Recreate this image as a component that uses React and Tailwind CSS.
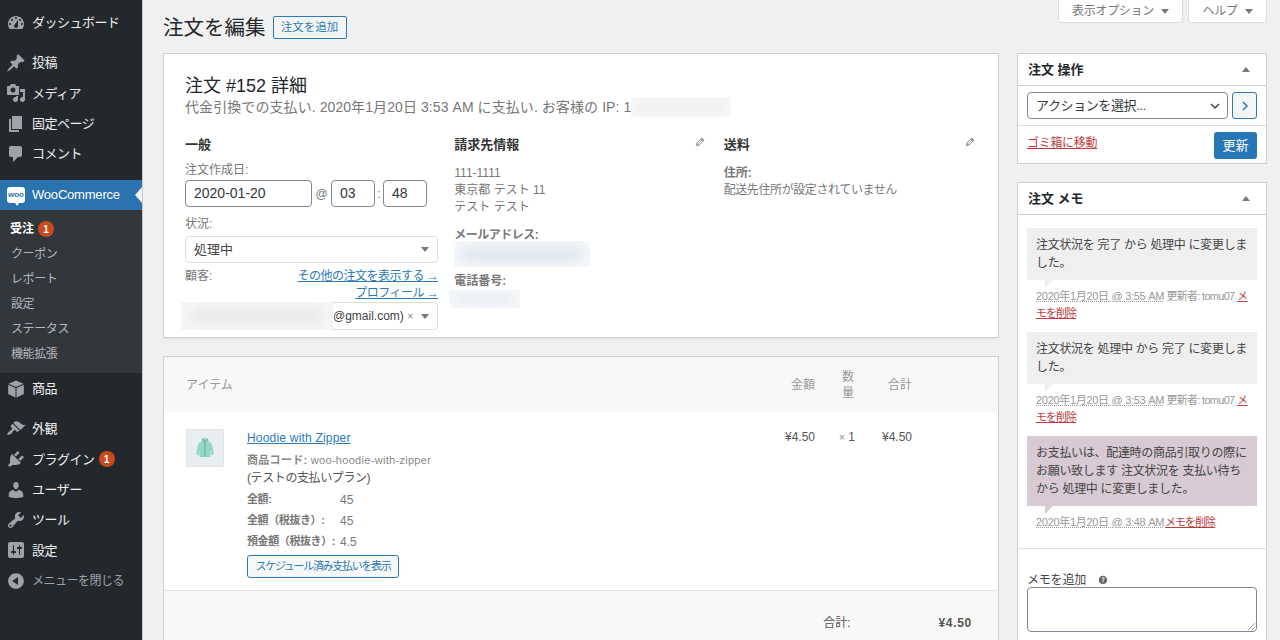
import React from "react";

const font = { fontFamily: '"Liberation Sans", "Noto Sans CJK JP", sans-serif' };

const ICONS = {
  dashboard: "M3.76 16h12.48c1.1-1.37 1.76-3.11 1.76-5 0-4.42-3.58-8-8-8s-8 3.58-8 8c0 1.89.66 3.63 1.76 5zM10 4c.55 0 1 .45 1 1s-.45 1-1 1-1-.45-1-1 .45-1 1-1zM6 6c.55 0 1 .45 1 1s-.45 1-1 1-1-.45-1-1 .45-1 1-1zm8 0c.55 0 1 .45 1 1s-.45 1-1 1-1-.45-1-1 .45-1 1-1zm-5.37 5.55L12 7v6c0 1.1-.9 2-2 2s-2-.9-2-2c0-.57.24-1.08.63-1.45zM4 10c.55 0 1 .45 1 1s-.45 1-1 1-1-.45-1-1 .45-1 1-1zm12 0c.55 0 1 .45 1 1s-.45 1-1 1-1-.45-1-1 .45-1 1-1z",
  post: "M10.44 3.02l1.82-1.82 6.36 6.35-1.83 1.82c-1.05-.68-2.48-.57-3.41.36l-.75.75c-.92.93-1.04 2.35-.35 3.41l-1.83 1.82-2.41-2.41-2.8 2.79c-.42.42-3.38 2.71-3.8 2.29s1.86-3.39 2.28-3.81l2.79-2.79L4.1 9.36l1.83-1.82c1.05.69 2.48.57 3.4-.36l.75-.75c.93-.92 1.05-2.35.36-3.41z",
  media: "M13 11V4c0-.55-.45-1-1-1h-1.67L9 1H5L3.67 3H2c-.55 0-1 .45-1 1v7c0 .55.45 1 1 1h10c.55 0 1-.45 1-1zM7 4.5c1.38 0 2.5 1.12 2.5 2.5S8.38 9.5 7 9.5 4.5 8.38 4.5 7 5.62 4.5 7 4.5zM14 6h5v10.5c0 1.38-1.12 2.5-2.5 2.5S14 17.88 14 16.5s1.12-2.5 2.5-2.5c.17 0 .34.02.5.05V9h-3V6zm-4 8.05V13h2v3.5c0 1.38-1.12 2.5-2.5 2.5S7 17.88 7 16.5 8.12 14 9.5 14c.17 0 .34.02.5.05z",
  page: "M6 15V2h10v13H6zm-1 1h8v2H3V5h2v11z",
  comment: "M5 2h9c1.1 0 2 .9 2 2v7c0 1.1-.9 2-2 2h-2l-5 5v-5H5c-1.1 0-2-.9-2-2V4c0-1.1.9-2 2-2z",
  product: "M10 1.5L17.5 4.8 10 8 2.500 4.800zM2.200 5.800L9.500 9v9.500L2.200 15zM17.800 5.800L10.500 9v9.500l7.300-3.500z",
  brush: "M14.48 11.06L7.41 3.99l1.5-1.5c.5-.56 2.3-.47 3.51.32 1.21.8 1.43 1.28 2.91 2.1 1.18.64 2.45 1.26 4.45.85zm-.71.71L6.7 4.7 4.93 6.47c-.39.39-.39 1.02 0 1.41l1.06 1.06c.39.39.39 1.03 0 1.42-.6.6-1.43 1.11-2.21 1.69-.35.26-.7.53-1.01.84C1.43 13.71.96 15.12 1.54 15.7l.05.05c.58.58 1.99.11 3.81-1.21.31-.31.58-.66.84-1.01.58-.78 1.09-1.61 1.69-2.21.39-.39 1.03-.39 1.42 0l1.06 1.06c.39.39 1.02.39 1.41 0z",
  plugin: "M13.11 4.36L9.87 7.6 8 5.73l3.24-3.24c.35-.34 1.05-.2 1.56.32.52.51.66 1.21.31 1.55zm-8 1.77l.91-1.12 9.01 9.01-1.19.84c-.71.71-2.63 1.16-3.82 1.16H6.14L4.9 17.26c-.59.59-1.54.59-2.12 0-.59-.58-.59-1.53 0-2.12l1.24-1.24v-3.88c0-1.13.4-3.19 1.09-3.89zm7.26 3.97l3.24-3.24c.34-.35 1.04-.21 1.55.31.52.51.66 1.21.31 1.55l-3.24 3.25z",
  user: "M10 9.25c-2.27 0-2.73-3.44-2.73-3.44C7 4.02 7.82 2 9.97 2c2.16 0 2.98 2.02 2.71 3.81 0 0-.41 3.44-2.68 3.44zm0 2.57L12.72 10c2.39 0 4.52 2.33 4.52 4.53v2.49s-3.65 1.13-7.24 1.13c-3.65 0-7.24-1.13-7.24-1.13v-2.49c0-2.25 1.94-4.48 4.47-4.48z",
  tool: "M16.68 9.77c-1.34 1.34-3.3 1.67-4.95.99l-5.41 6.52c-.99.99-2.59.99-3.58 0s-.99-2.59 0-3.57l6.52-5.42c-.68-1.65-.35-3.61.99-4.95 1.28-1.28 3.12-1.62 4.72-1.06l-2.89 2.89 2.82 2.82 2.86-2.87c.53 1.58.18 3.39-1.08 4.67zM3.81 16.21c.4.39 1.04.39 1.43 0 .4-.4.4-1.04 0-1.43-.39-.4-1.03-.4-1.43 0-.39.39-.39 1.03 0 1.43z",
  settings: "M18 16V4c0-1.1-.9-2-2-2H4c-1.1 0-2 .9-2 2v12c0 1.1.9 2 2 2h12c1.1 0 2-.9 2-2zM8 11h1c.55 0 1 .45 1 1s-.45 1-1 1H8v1.5c0 .28-.22.5-.5.5s-.5-.22-.5-.5V13H6c-.55 0-1-.45-1-1s.45-1 1-1h1V5.5c0-.28.22-.5.5-.5s.5.22.5.5V11zm5-2h-1c-.55 0-1-.45-1-1s.45-1 1-1h1V5.5c0-.28.22-.5.5-.5s.5.22.5.5V7h1c.55 0 1 .45 1 1s-.45 1-1 1h-1v5.5c0 .28-.22.5-.5.5s-.5-.22-.5-.5V9z",
  collapse: "M10 2.16c4.33 0 7.84 3.51 7.84 7.84s-3.51 7.84-7.84 7.84S2.16 14.33 2.16 10 5.71 2.16 10 2.16zm2 11.72V6.12L6.18 9.97z",
  edit: "M13.89 3.39l2.71 2.72c.46.46.42 1.24.03 1.64l-8.01 8.02-5.56 1.16 1.16-5.58s7.6-7.63 7.99-8.03c.39-.39 1.22-.39 1.68.07zm-2.73 2.79l-5.59 5.61 1.11 1.11 5.54-5.65zm-2.97 8.23l5.58-5.6-1.07-1.08-5.59 5.6z",
  help: "M17 10c0-3.87-3.14-7-7-7-3.87 0-7 3.13-7 7 0 3.86 3.13 7 7 7 3.86 0 7-3.14 7-7zm-6.3 1.48H9.14v-.43c0-.38.08-.7.24-.98s.46-.57.88-.89c.41-.29.68-.53.81-.71.14-.18.2-.39.2-.62 0-.25-.09-.44-.28-.58-.19-.13-.45-.19-.79-.19-.34 0-.68.05-1.02.16s-.68.25-1.03.42l-.64-1.29c.4-.22.82-.4 1.28-.54.46-.14.95-.21 1.47-.21.78 0 1.4.18 1.86.55.46.37.69.87.69 1.49 0 .41-.1.77-.29 1.08-.19.31-.57.66-1.13 1.06-.39.29-.63.51-.74.66-.11.16-.16.36-.16.6v.42zm-1.52.96c.18-.18.45-.26.8-.26.34 0 .61.09.79.26.19.18.28.42.28.74 0 .32-.09.57-.28.75-.19.18-.45.27-.79.27-.35 0-.61-.09-.8-.26-.19-.18-.28-.43-.28-.76s.09-.57.28-.74z",
};

const Icon = ({ name, className }) => (
  <svg viewBox="0 0 20 20" className={className} fill="currentColor">
    <path d={ICONS[name]} fillRule="evenodd" />
  </svg>
);

const Badge = ({ n }) => (
  <span className="ml-[4px] flex h-4 w-4 items-center justify-center rounded-full bg-[#ca4a1f] text-[10px] font-bold tracking-normal text-white">{n}</span>
);

const MenuItem = ({ icon, label, badge, dim }) => (
  <div className="flex h-[30.33px] items-center">
    <Icon name={icon} className="ml-[6px] h-[20px] w-[20px] shrink-0 text-[#9ea3a8]" />
    <span className={`ml-[6px] whitespace-nowrap tracking-[-0.5px] ${dim ? "text-[12px] text-[#9ea3a8]" : "text-[13px] text-[#eeeeee]"}`}>{label}</span>
    {badge && <Badge n={badge} />}
  </div>
);

const Sidebar = () => (
  <aside className="flex w-[143px] shrink-0 flex-col border-r border-[#c9c9c9] bg-[#23282d] pt-[8px]">
    <MenuItem icon="dashboard" label="ダッシュボード" />
    <div className="mt-[9.67px]">
      <MenuItem icon="post" label="投稿" />
      <MenuItem icon="media" label="メディア" />
      <MenuItem icon="page" label="固定ページ" />
      <MenuItem icon="comment" label="コメント" />
    </div>
    <div className="relative mt-[10.7px] flex h-[30px] shrink-0 items-center bg-[#2a73ae]">
      <div className="relative ml-[7px] flex h-[16px] w-[18px] items-center justify-center rounded-[3px] bg-white">
        <span className="text-[8px] font-bold italic leading-none text-[#2a73ae]">woo</span>
        <span className="absolute -bottom-[3px] left-[8px] h-0 w-0 border-x-[2px] border-t-[3px] border-x-transparent border-t-white" />
      </div>
      <span className="ml-[7px] text-[13px] tracking-[-0.2px] text-white">WooCommerce</span>
      <span className="absolute right-0 top-[7px] h-0 w-0 border-y-[8px] border-r-[7px] border-y-transparent border-r-[#f0f0f0]" />
    </div>
    <div className="flex h-[163px] shrink-0 flex-col bg-[#32373c] pt-[7px] text-[12px] tracking-[-0.4px] text-[#b4b9be]">
      <div className="flex h-[25px] items-center pl-[10px] font-bold tracking-normal text-white">受注<Badge n="1" /></div>
      {["クーポン", "レポート", "設定", "ステータス", "機能拡張"].map((t) => (
        <div key={t} className="flex h-[25px] items-center pl-[11px]">{t}</div>
      ))}
    </div>
    <div className="mt-[1px]">
      <MenuItem icon="product" label="商品" />
    </div>
    <div className="mt-[9.67px]">
      <MenuItem icon="brush" label="外観" />
      <MenuItem icon="plugin" label="プラグイン" badge="1" />
      <MenuItem icon="user" label="ユーザー" />
      <MenuItem icon="tool" label="ツール" />
      <MenuItem icon="settings" label="設定" />
      <MenuItem icon="collapse" label="メニューを閉じる" dim />
    </div>
  </aside>
);

const Caret = () => <span className="h-0 w-0 border-x-[4px] border-t-[5px] border-x-transparent border-t-[#777777]" />;

const Blur = ({ className }) => (
  <div className={`overflow-hidden bg-[#f6f8fa] ${className}`}>
    <div className="m-[6px] h-[calc(100%-12px)] rounded-full bg-[#dde6ee] blur-[6px]" />
  </div>
);

const TextBox = ({ className, children }) => (
  <div className={`flex h-[27px] items-center rounded-[4px] border border-[#7e8993] bg-white text-[14px] text-[#32373c] ${className}`}>{children}</div>
);

const SelectBox = ({ className, children }) => (
  <div className={`flex items-center rounded-[4px] border border-[#dddddd] bg-white pl-2 pr-[8px] text-[13px] text-[#444444] ${className}`}>
    {children}
  </div>
);

const OrderData = () => (
  <section className="h-[285px] border border-[#ccd0d4] bg-white px-[21px] pt-[20px] shadow-[0_1px_1px_rgba(0,0,0,0.04)]">
    <h2 className="text-[18px] leading-[24px] text-[#23282d]">注文 #152 詳細</h2>
    <div className="-mt-[1px] flex text-[14px] leading-[20px] tracking-[0.08px] text-[#777777]">
      <span>代金引換での支払い. 2020年1月20日 3:53 AM に支払い. お客様の IP: 1</span>
      <div className="h-[20px] w-[100px] overflow-hidden bg-[#f8f8f8]">
        <div className="m-[4px] h-[12px] rounded-full bg-[#f0f0f0] blur-[4px]" />
      </div>
    </div>
    <div className="mt-[19px] grid grid-cols-3 gap-4">
      <div>
        <h3 className="text-[13px] font-bold leading-[18px] text-[#333333]">一般</h3>
        <div className="mt-[8px] text-[12px] leading-[16px] text-[#777777]">注文作成日:</div>
        <div className="mt-[2px] flex items-center text-[12px] text-[#777777]">
          <TextBox className="w-[127px] pl-2">2020-01-20</TextBox>
          <span className="mx-[1px] w-[17px] text-center">@</span>
          <TextBox className="w-[44px] pl-2">03</TextBox>
          <span className="w-[8px] text-center">:</span>
          <TextBox className="w-[44px] pl-2">48</TextBox>
        </div>
        <div className="mt-[9px] text-[12px] leading-[16px] text-[#777777]">状況:</div>
        <div className="mt-[4px]">
          <SelectBox className="h-[27px]">
            <span className="flex-1">処理中</span>
            <Caret />
          </SelectBox>
        </div>
        <div className="mt-[5px] flex justify-between text-[12px] leading-[17px] text-[#777777]">
          <span>顧客:</span>
          <div className="flex flex-col items-end tracking-[-0.5px] text-[#2b7ab5] underline">
            <span>その他の注文を表示する →</span>
            <span>プロフィール →</span>
          </div>
        </div>
        <div className="relative">
          <SelectBox className="h-[28px]">
            <span className="flex-1 pl-[139px] text-[12px] text-[#444444]">@gmail.com)</span>
            <span className="mr-[8px] text-[11px] leading-none text-[#888888]">×</span>
            <Caret />
          </SelectBox>
          <div className="absolute -left-[4px] top-0 h-[28px] w-[152px] overflow-hidden bg-[#f5f5f5]">
            <div className="mx-[10px] mt-[6px] h-[16px] rounded-full bg-[#ebebeb] blur-[4px]" />
          </div>
        </div>
      </div>
      <div>
        <div className="flex justify-between">
          <h3 className="text-[13px] font-bold leading-[18px] text-[#333333]">請求先情報</h3>
          <Icon name="edit" className="mr-[2px] h-[12px] w-[12px] text-[#999999]" />
        </div>
        <div className="mt-[11px] text-[12px] leading-[17px] text-[#777777]">
          <p>111-1111</p>
          <p>東京都 テスト 11</p>
          <p>テスト テスト</p>
        </div>
        <div className="mt-[11px] text-[12px] font-bold leading-[17px] tracking-[-0.5px] text-[#777777]">メールアドレス:</div>
        <Blur className="-mt-[3px] h-[26px] w-[136px]" />
        <div className="mt-[6px] text-[12px] font-bold leading-[17px] text-[#777777]">電話番号:</div>
        <Blur className="-ml-[5px] h-[18px] w-[71px]" />
      </div>
      <div>
        <div className="flex justify-between">
          <h3 className="text-[13px] font-bold leading-[18px] text-[#333333]">送料</h3>
          <Icon name="edit" className="mr-[1px] h-[12px] w-[12px] text-[#999999]" />
        </div>
        <div className="mt-[11px] text-[12px] font-bold leading-[17px] text-[#777777]">住所:</div>
        <div className="text-[12px] leading-[17px] tracking-[-0.4px] text-[#777777]">配送先住所が設定されていません</div>
      </div>
    </div>
  </section>
);

const Hoodie = () => (
  <div className="flex h-[38px] w-[38px] shrink-0 items-center justify-center border border-[#e2e4e6] bg-[#e9eef2]">
    <svg viewBox="0 0 24 24" className="h-[24px] w-[24px]">
      <path d="M9 3c1-1.500 5-1.500 6 0l1 3c2 .6 3 2 3.400 4l1.400 8.500-2.300.7-1-5.200V21H6.500v-7l-1 5.200-2.300-.7L4.600 10c.4-2 1.400-3.400 3.400-4z" fill="#93d8c2" />
      <path d="M12 3.500V21M9 3l3 3.500L15 3" fill="none" stroke="#5f9c8c" strokeWidth="0.7" />
    </svg>
  </div>
);

const MetaRow = ({ label, value }) => (
  <div className="flex h-[21px] items-center text-[#777777]">
    <span className="w-[93px] whitespace-nowrap text-[11px] font-bold tracking-[-0.4px]">{label}</span>
    <span className="text-[12px]">{value}</span>
  </div>
);

const OrderItems = () => (
  <section className="mt-[18px] border border-[#ccd0d4] bg-white">
    <div className="flex h-[55px] items-center bg-[#f8f8f8] pl-[22px] text-[12px] text-[#999999]">
      <span className="flex-1">アイテム</span>
      <span className="w-[40px] text-right">金額</span>
      <span className="ml-[27px] w-[12px] text-center leading-[16px]">数量</span>
      <span className="ml-[34px] mr-[86px] w-[24px] text-right">合計</span>
    </div>
    <div className="flex h-[178px] pl-[22px] pt-[17px]">
      <Hoodie />
      <div className="ml-[23px] flex-1">
        <a className="mt-[1px] block text-[12px] leading-[17px] tracking-[0.2px] text-[#2b7ab5] underline">Hoodie with Zipper</a>
        <div className="mt-[5px] text-[11px] leading-[16px] tracking-[0.3px] text-[#888888]">
          <span className="font-bold">商品コード:</span> woo-hoodie-with-zipper
        </div>
        <div className="mt-[2px] text-[12px] leading-[17px] tracking-[-0.4px] text-[#555555]">(テストの支払いプラン)</div>
        <div className="mt-[2px]">
          <MetaRow label="全額:" value="45" />
          <MetaRow label="全額（税抜き）:" value="45" />
          <MetaRow label="預金額（税抜き）:" value="4.5" />
        </div>
        <div className="mt-[3px] flex h-[23px] w-[152px] items-center justify-center whitespace-nowrap rounded-[3px] border border-[#2b7ab5] bg-[#f6f7f7] text-[11px] tracking-[-1.3px] text-[#2b7ab5]">
          スケジュール済み支払いを表示
        </div>
      </div>
      <div className="flex h-[17px] pr-[86px] text-[12px] leading-[17px] text-[#555555]">
        <span className="w-[40px] text-right">¥4.50</span>
        <span className="ml-[24px] w-[18px] whitespace-nowrap"><span className="text-[10px] text-[#888888]">×</span> 1</span>
        <span className="ml-[24px] w-[31px] text-right">¥4.50</span>
      </div>
    </div>
    <div className="flex h-[60px] items-start justify-end border-t border-[#e5e5e5] bg-[#f8f8f8] pr-[26px] pt-[24px] text-[12px] leading-[17px] text-[#555555]">
      <span>合計:</span>
      <span className="ml-[88px] font-bold tracking-[0.7px]">¥4.50</span>
    </div>
  </section>
);

const BoxHeader = ({ title }) => (
  <div className="flex h-[32px] items-center justify-between border-b border-[#ccd0d4] pl-[10px] pr-[16px]">
    <span className="text-[13px] font-bold text-[#23282d]">{title}</span>
    <span className="h-0 w-0 border-x-[4px] border-b-[5px] border-x-transparent border-b-[#777777]" />
  </div>
);

const Note = ({ text, when, by, tint }) => (
  <div className="mb-[10px]">
    <div className={`relative px-[9px] py-[8px] text-[12px] leading-[18px] tracking-[-0.3px] text-[#444444] ${tint ? "bg-[#d7cad2]" : "bg-[#efefef]"}`}>
      {text}
      <span className={`absolute -bottom-[8px] left-[18px] h-0 w-0 border-r-[8px] border-t-[8px] border-r-transparent ${tint ? "border-t-[#d7cad2]" : "border-t-[#efefef]"}`} />
    </div>
    <div className="mt-[8px] px-[9px] text-[11px] leading-[17px] tracking-[-0.3px] text-[#999999]">
      <span className="underline decoration-dotted">{when}</span>
      {by ? (
        <>
          <span className="tracking-[-0.7px]"> 更新者: {by} </span>
          <span className="text-[#bc3b3b] underline">メ</span>
          <br />
          <span className="tracking-[-1px] text-[#bc3b3b] underline">モを削除</span>
        </>
      ) : (
        <span className="ml-[1px] tracking-[-1px] text-[#bc3b3b] underline">メモを削除</span>
      )}
    </div>
  </div>
);

const RightColumn = () => (
  <div className="w-[250px] shrink-0">
    <section className="h-[111px] border border-[#ccd0d4] bg-white">
      <BoxHeader title="注文 操作" />
      <div className="flex h-[40px] items-center gap-[4px] border-b border-[#dddddd] pl-[9px] pr-[9px]">
        <div className="flex h-[27px] flex-1 items-center justify-between rounded-[4px] border border-[#7e8993] pl-2 pr-[6px] text-[13px] tracking-[-0.4px] text-[#32373c]">
          <span>アクションを選択...</span>
          <svg viewBox="0 0 12 12" className="h-[12px] w-[12px]"><path d="M2 4l4 4 4-4" fill="none" stroke="#444444" strokeWidth="1.500" /></svg>
        </div>
        <div className="flex h-[27px] w-[25px] items-center justify-center rounded-[3px] border border-[#2b7ab5] bg-[#f3f5f6]">
          <svg viewBox="0 0 12 12" className="h-[12px] w-[12px]"><path d="M4 2l4 4-4 4" fill="none" stroke="#2b7ab5" strokeWidth="1.500" /></svg>
        </div>
      </div>
      <div className="flex justify-between pl-[9px] pr-[9px] pt-[6px]">
        <span className="mt-[3px] text-[12px] leading-[17px] tracking-[-0.3px] text-[#bc3b3b] underline">ゴミ箱に移動</span>
        <div className="flex h-[27px] w-[43px] items-center justify-center rounded-[3px] bg-[#2777b6] text-[13px] text-white">更新</div>
      </div>
    </section>
    <section className="mt-[18px] h-[600px] border border-[#ccd0d4] bg-white">
      <BoxHeader title="注文 メモ" />
      <div className="h-[334px] border-b border-[#dddddd] px-[9px] pt-[13px]">
        <Note text="注文状況を 完了 から 処理中 に変更しました。" when="2020年1月20日 @ 3:55 AM" by="tomu07" />
        <Note text="注文状況を 処理中 から 完了 に変更しました。" when="2020年1月20日 @ 3:53 AM" by="tomu07" />
        <Note tint text="お支払いは、配達時の商品引取りの際にお願い致します 注文状況を 支払い待ちから 処理中 に変更しました。" when="2020年1月20日 @ 3:48 AM" />
      </div>
      <div className="px-[9px] pt-[22px]">
        <div className="flex h-[17px] items-center text-[12px] tracking-[-0.2px] text-[#444444]">
          メモを追加
          <Icon name="help" className="ml-[11px] h-[12px] w-[12px] text-[#666666]" />
        </div>
        <div className="relative -mt-[1px] h-[45px] rounded-[4px] border border-[#7e8993] bg-white">
          <svg viewBox="0 0 8 8" className="absolute bottom-[1px] right-[1px] h-[8px] w-[8px]"><path d="M1 8l7-7M5 8l3-3" stroke="#888888" strokeWidth="0.800" /></svg>
        </div>
      </div>
    </section>
  </div>
);

const ScreenTab = ({ label, className }) => (
  <div className={`flex h-[23px] items-center justify-center gap-[7px] rounded-b-[4px] border border-t-0 border-[#dddddd] bg-white text-[12px] tracking-[-0.3px] text-[#777777] ${className}`}>
    {label}
    <span className="h-0 w-0 border-x-[4px] border-t-[5px] border-x-transparent border-t-[#777777]" />
  </div>
);

export default function App() {
  return (
    <div className="flex h-[640px] overflow-hidden bg-[#f0f0f0]" style={font}>
      <Sidebar />
      <main className="min-w-0 flex-1 pl-5 pr-[13px]">
        <div className="flex h-[53px] items-start justify-between">
          <div className="flex items-center gap-[7px] pt-[14px]">
            <h1 className="text-[20.5px] leading-[27px] text-[#23282d]">注文を編集</h1>
            <div className="flex h-[23px] w-[74px] items-center justify-center rounded-[2px] border border-[#2b7ab5] bg-[#f3f5f6] text-[11.5px] text-[#2b7ab5]">注文を追加</div>
          </div>
          <div className="flex gap-[5px]">
            <ScreenTab label="表示オプション" className="w-[125px]" />
            <ScreenTab label="ヘルプ" className="w-[79px]" />
          </div>
        </div>
        <div className="flex gap-[18px]">
          <div className="min-w-0 flex-1">
            <OrderData />
            <OrderItems />
          </div>
          <RightColumn />
        </div>
      </main>
    </div>
  );
}
